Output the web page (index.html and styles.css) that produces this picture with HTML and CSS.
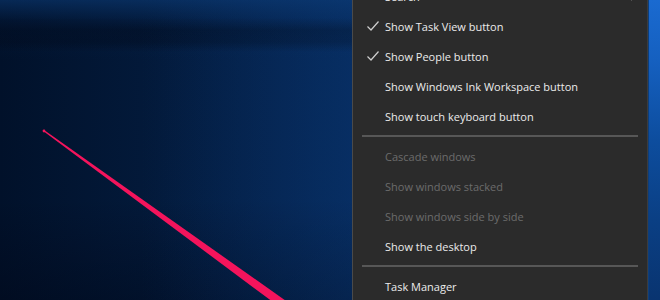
FILE: index.html
```html
<!DOCTYPE html>
<html>
<head>
<meta charset="utf-8">
<link rel="stylesheet" href="styles.css">
</head>
<body>
<div class="screen">
  <div class="desktop">
    <svg class="laser" width="352" height="300" viewBox="0 0 352 300">
      <polygon points="42.5,130.5 45.5,131 296,308 281,308" fill="#f4145c"/>
      <circle cx="44" cy="131" r="1.4" fill="#f4145c"/>
    </svg>
  </div>
  <div class="menu">
    <div class="item">
      <span class="check"></span><span class="label">Search</span>
      <svg class="arrow" width="8" height="10" viewBox="0 0 8 10"><path d="M2 1 L6 5 L2 9" fill="none" stroke="#e0e0e0" stroke-width="1.2"/></svg>
    </div>
    <div class="item">
      <span class="check"><svg width="14" height="12" viewBox="0 0 14 12"><path d="M1.5 6.5 L5 10 L12.5 1.5" fill="none" stroke="#cfcfcf" stroke-width="1.2"/></svg></span><span class="label">Show Task View button</span>
    </div>
    <div class="item">
      <span class="check"><svg width="14" height="12" viewBox="0 0 14 12"><path d="M1.5 6.5 L5 10 L12.5 1.5" fill="none" stroke="#cfcfcf" stroke-width="1.2"/></svg></span><span class="label">Show People button</span>
    </div>
    <div class="item"><span class="check"></span><span class="label">Show Windows Ink Workspace button</span></div>
    <div class="item"><span class="check"></span><span class="label">Show touch keyboard button</span></div>
    <div class="sep"></div>
    <div class="item disabled"><span class="check"></span><span class="label">Cascade windows</span></div>
    <div class="item disabled"><span class="check"></span><span class="label">Show windows stacked</span></div>
    <div class="item disabled"><span class="check"></span><span class="label">Show windows side by side</span></div>
    <div class="item"><span class="check"></span><span class="label">Show the desktop</span></div>
    <div class="sep"></div>
    <div class="item"><span class="check"></span><span class="label">Task Manager</span></div>
  </div>
  <div class="edge"></div>
</div>
</body>
</html>
```

FILE: styles.css
```css
html, body {
  margin: 0;
  padding: 0;
  width: 660px;
  height: 300px;
  overflow: hidden;
  background: #031a3a;
}

.screen {
  display: flex;
  width: 660px;
  height: 300px;
  overflow: hidden;
}

.desktop {
  width: 352px;
  height: 300px;
  flex: none;
  position: relative;
  background:
    linear-gradient(180deg, rgba(0,10,30,0) 0px, rgba(0,10,30,0) 18px, rgba(0,8,24,0.55) 30px, rgba(0,8,24,0.45) 42px, rgba(0,10,30,0) 52px, rgba(0,10,30,0) 300px),
    linear-gradient(90deg, #01112a 0%, #031a3b 45%, #06285a 100%),
    #031a3a;
}

.desktop::after {
  content: "";
  position: absolute;
  inset: 0;
  background:
    linear-gradient(180deg, rgba(12,60,120,0.55) 0px, rgba(12,60,120,0.1) 20px, rgba(10,50,100,0.0) 60px),
    linear-gradient(90deg, rgba(0,0,0,0) 40%, rgba(10,60,120,0.3) 100%),
    linear-gradient(180deg, rgba(0,0,0,0) 200px, rgba(0,5,20,0.4) 300px);
  pointer-events: none;
}

.laser {
  position: absolute;
  left: 0;
  top: 0;
  z-index: 1;
}

.menu {
  width: 296px;
  flex: none;
  margin-top: -19px;
  height: 330px;
  background: #2b2b2b;
  border-left: 1px solid #4a4a4a;
  border-right: 1px solid #3c3c3c;
  box-sizing: border-box;
  font-family: "Open Sans", "Noto Sans", sans-serif;
  font-size: 11px;
  color: #ececec;
}

.item {
  height: 30px;
  display: flex;
  align-items: center;
  position: relative;
}

.check {
  width: 32px;
  flex: none;
  display: flex;
  align-items: center;
  justify-content: flex-end;
  box-sizing: border-box;
}

.check svg {
  display: block;
  margin-right: 5px;
}

.label {
  white-space: nowrap;
}

.disabled {
  color: #6c6c6c;
}

.arrow {
  margin-left: auto;
  margin-right: 10px;
}

.sep {
  height: 10px;
  display: flex;
  align-items: center;
  padding: 0 9px;
}

.sep::before {
  content: "";
  display: block;
  flex: 1;
  height: 2px;
  background: #575757;
}

.edge {
  flex: 1;
  height: 300px;
  background: linear-gradient(180deg, #1a6ad0 0px, #1560c0 60px, #0d4d9e 140px, #0a3f84 220px, #093470 300px);
  border-left: 1px solid #0e3e7a;
}
```
